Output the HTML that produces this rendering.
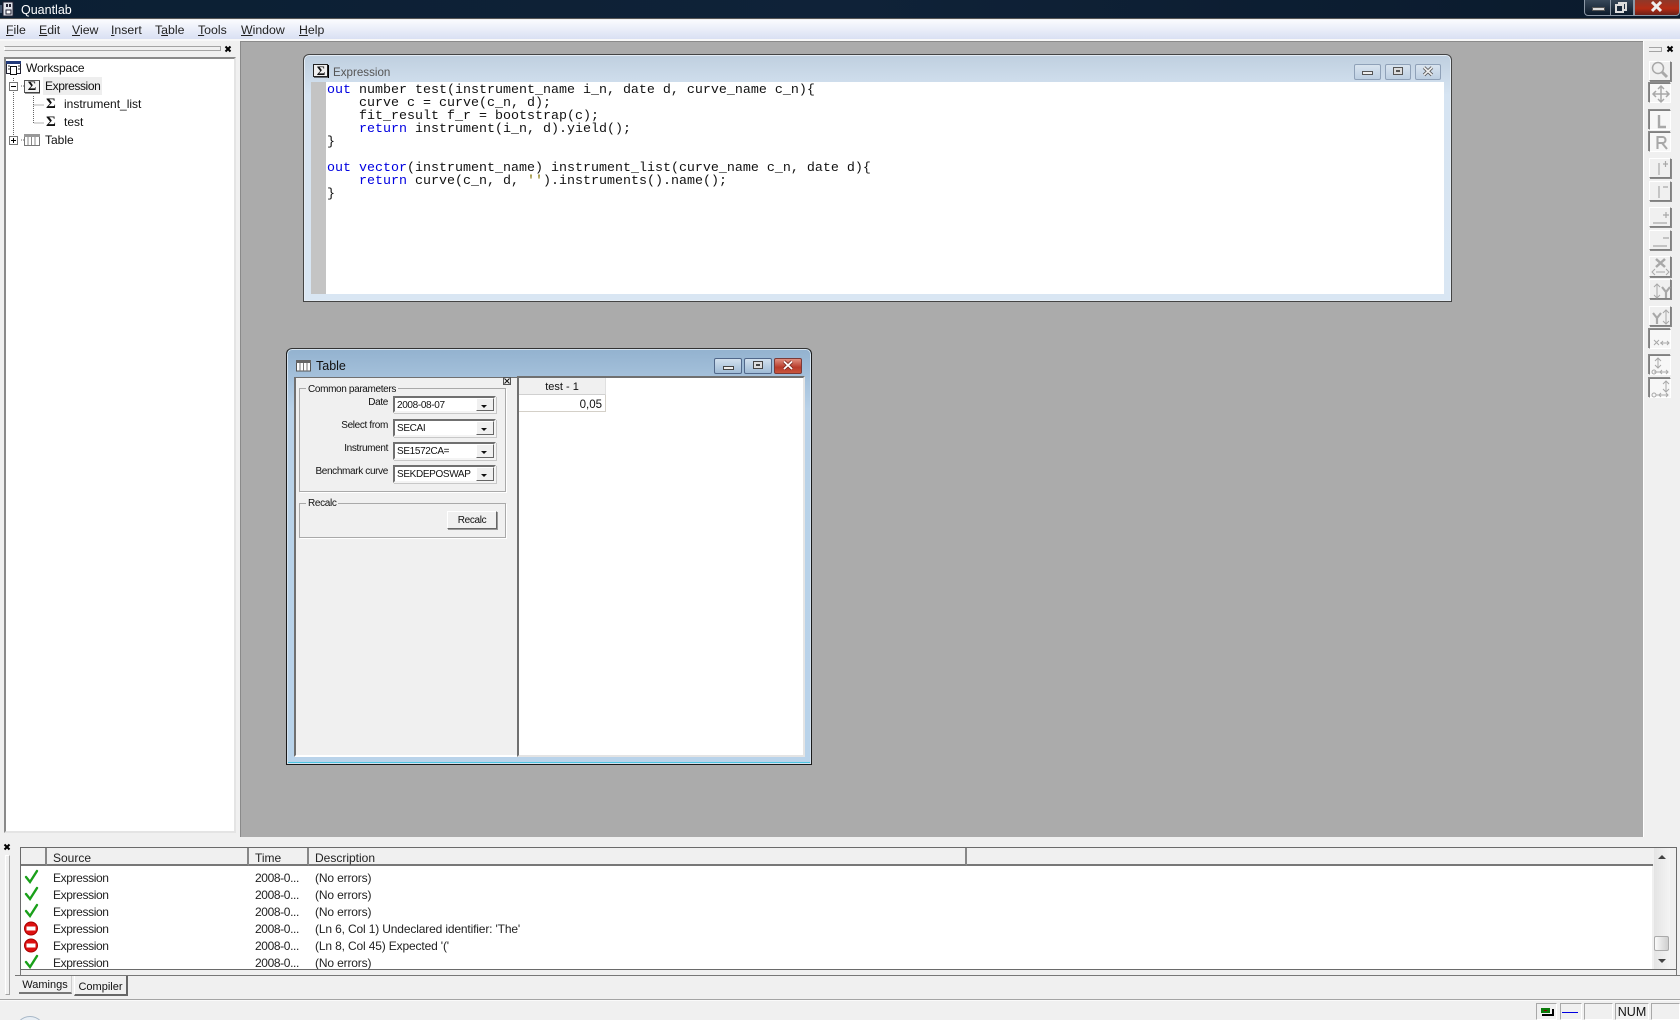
<!DOCTYPE html>
<html><head><meta charset="utf-8"><title>Quantlab</title>
<style>
html,body{margin:0;padding:0;width:1680px;height:1020px;overflow:hidden;background:#f0f0f0}
body{position:relative;font:12px "Liberation Sans",sans-serif;color:#111}
div,span.a,svg.a{position:absolute;box-sizing:border-box}
.t{white-space:nowrap;line-height:16px;height:16px}
.m{top:22px;font-size:12.3px;color:#222}
.code{font:13.33px/13px "Liberation Mono",monospace;white-space:pre;color:#111;left:327px;top:84px}
.code b{font-weight:normal;color:#0000e0}
.code i{font-style:normal;color:#807000}
.tb{left:1649px;width:22px;background:#f0f0f0;border:1px solid;border-color:#fff #808080 #808080 #fff;box-shadow:1px 1px 0 #8a8a8a}
.tb.on{border-color:#808080 #fff #fff #808080;box-shadow:-1px -1px 0 #8a8a8a;background:#f7f7f7}
.wb{height:16px;border:1px solid #8fa1b8;border-radius:2px;background:linear-gradient(#d9e4ef,#bdcfe2)}
.combo{left:393px;width:103px;background:#fff;border:2px solid;border-color:#707070 #f4f4f4 #f4f4f4 #707070;box-shadow:1px 1px 0 #c8c8c8;font-size:10px;letter-spacing:-.35px;line-height:13px;padding:1px 0 0 2px;color:#111;white-space:nowrap;overflow:hidden}
.combo u{position:absolute;text-decoration:none;right:0;top:0;bottom:0;width:16px;background:#f0f0f0;border:1px solid;border-color:#fff #666 #666 #fff}
.combo u:after{content:"";position:absolute;left:4px;top:6px;border:3px solid transparent;border-top:3px solid #111;border-bottom:0}
.lab{width:100px;left:288px;text-align:right;font-size:10px;letter-spacing:-.35px;color:#111}
.grp{left:299px;width:207px;border:1px solid #a9a9a9;box-shadow:1px 1px 0 #fff}
.row{font-size:12px;color:#222;letter-spacing:-.15px}
.row.n{letter-spacing:-.38px}
.hd{top:848px;height:18px;background:#f0f0f0;border-right:2px solid #888;border-bottom:2px solid #777;font-size:12px;line-height:19px;padding:1px 0 0 6px;color:#222}
.st{top:1003px;height:17px;border:1px solid;border-color:#a8a8a8 #fff #fff #a8a8a8}
</style></head><body>

<!-- Title bar -->
<div style="left:0;top:0;width:1680px;height:19px;background:linear-gradient(90deg,#0b1f33,#0f2238 50%,#0a1a2c);border-bottom:1px solid #555"></div>
<svg class="a" style="left:0;top:1px" width="16" height="16"><rect x="3" y="1" width="10" height="14" fill="#dfe3ea" stroke="#223"/><rect x="6" y="3" width="2" height="3" fill="#223"/><rect x="9" y="3" width="2" height="3" fill="#223"/><rect x="6" y="9" width="5" height="4" fill="#fff" stroke="#223"/><path d="M1 4v8" stroke="#7a8aa8"/></svg>
<div class="t" style="left:21px;top:2px;color:#fff;font-size:12.5px">Quantlab</div>
<div style="left:1584px;top:-2px;width:29px;height:18px;background:linear-gradient(#3a4a5c,#0c1a2a);border:1px solid #8c98a6;border-radius:0 0 0 4px"></div>
<div style="left:1592px;top:7px;width:13px;height:4px;background:#ddd;border:1px solid #555"></div>
<div style="left:1610px;top:-2px;width:24px;height:18px;background:linear-gradient(#3a4a5c,#0c1a2a);border:1px solid #8c98a6"></div>
<div style="left:1618px;top:2px;width:9px;height:9px;border:2px solid #ddd"></div>
<div style="left:1615px;top:4px;width:9px;height:9px;border:2px solid #ddd;background:#1a2a3c"></div>
<div style="left:1634px;top:-2px;width:46px;height:18px;background:linear-gradient(#8a3a2c,#b42c14 60%,#6a2018);border:1px solid #8c98a6;border-radius:0 0 4px 0"></div>
<svg class="a" style="left:1650px;top:1px" width="14" height="12"><path d="M2 1l9 9M11 1l-9 9" stroke="#eee" stroke-width="3"/></svg>

<!-- Menu -->
<div style="left:0;top:20px;width:1680px;height:19px;background:linear-gradient(#fafbfe,#d9e0f3)"></div>
<div style="left:0;top:39px;width:1680px;height:2px;background:#f8f8f8"></div>
<div class="t m" style="left:6px"><u>F</u>ile</div>
<div class="t m" style="left:39px"><u>E</u>dit</div>
<div class="t m" style="left:72px"><u>V</u>iew</div>
<div class="t m" style="left:111px"><u>I</u>nsert</div>
<div class="t m" style="left:155px">T<u>a</u>ble</div>
<div class="t m" style="left:198px"><u>T</u>ools</div>
<div class="t m" style="left:241px"><u>W</u>indow</div>
<div class="t m" style="left:299px"><u>H</u>elp</div>

<!-- MDI -->
<div style="left:240px;top:41px;width:1404px;height:796px;background:#ababab;border-top:1px solid #8a8a8a;border-left:1px solid #8a8a8a"></div>

<!-- Left panel -->
<div style="left:4px;top:46px;width:217px;height:5px;border:1px solid #a4a4a4;border-left-color:#fff"></div>
<svg class="a" style="left:224px;top:45px" width="9" height="9"><path d="M1.5 1.5l5 5M6.5 1.5l-5 5" stroke="#000" stroke-width="2"/></svg>
<div style="left:4px;top:57px;width:232px;height:776px;background:#fff;border:2px solid;border-color:#8a8a8a #e4e4e4 #e4e4e4 #8a8a8a"></div>
<div style="left:43px;top:77px;width:59px;height:18px;background:#eeeeee"></div>
<svg class="a" style="left:4px;top:58px" width="150" height="100">
 <g stroke="#666" stroke-dasharray="1 1" fill="none"><path d="M9.5 20V82M17 28H20M29.5 38V65H40M29.5 47H40M17 82H20"/></g>
 <g fill="#fff" stroke="#777"><rect x="5.5" y="24.5" width="8" height="8"/><rect x="5.5" y="78.5" width="8" height="8"/></g>
 <path d="M7 28.5h5M7 82.5h5M9.5 80v5" stroke="#000"/>
 <rect x="2.5" y="3.5" width="14" height="12" fill="#fff" stroke="#223"/><rect x="2" y="3" width="15" height="3" fill="#223a7a"/><rect x="6.500" y="8.500" width="6" height="8" fill="#fff" stroke="#111"/><path d="M4 8h2M4 11h2M14 8h2M14 11h2" stroke="#333"/>
 <rect x="20.500" y="22.500" width="15" height="12" fill="#f4f4f4" stroke="#555"/><path d="M35.500 23v12H21" stroke="#333" fill="none"/>
 <rect x="20.500" y="76.500" width="15" height="11" fill="#fff" stroke="#777"/><rect x="20" y="76" width="16" height="3" fill="#999"/><path d="M24 79v8M27.500 79v8M31 79v8" stroke="#888"/>
</svg>
<div class="t" style="left:26px;top:60px;letter-spacing:-.15px">Workspace</div>
<div class="t" style="left:45px;top:78px;letter-spacing:-.4px">Expression</div>
<div class="t" style="left:64px;top:96px">instrument_list</div>
<div class="t" style="left:64px;top:114px">test</div>
<div class="t" style="left:45px;top:132px">Table</div>
<div class="t" style="left:25px;top:78px;width:14px;text-align:center;font:bold 13px/16px 'Liberation Serif',serif">Σ</div>
<div class="t" style="left:46px;top:96px;font:bold 15px/16px 'Liberation Serif',serif">Σ</div>
<div class="t" style="left:46px;top:114px;font:bold 15px/16px 'Liberation Serif',serif">Σ</div>

<!-- Expression window -->
<div style="left:303px;top:54px;width:1149px;height:248px;border:1px solid #444;border-radius:6px 6px 0 0;background:linear-gradient(#bfcfdf,#d6e4f2 40px,#d9e6f3);box-shadow:inset 0 0 0 1px #e4ecf4"></div>
<svg class="a" style="left:313px;top:64px" width="16" height="14"><rect x=".5" y=".5" width="14" height="12" fill="#f0f0f0" stroke="#222"/><path d="M15.500 1v13H1" stroke="#000" fill="none"/></svg>
<div class="t" style="left:314px;top:63px;width:14px;text-align:center;font:bold 13px/16px 'Liberation Serif',serif">Σ</div>
<div class="t" style="left:333px;top:65px;color:#555;font-size:11.6px">Expression</div>
<div class="wb" style="left:1354px;top:64px;width:27px"></div><div style="left:1362px;top:71px;width:11px;height:4px;background:#eee;border:1px solid #555"></div>
<div class="wb" style="left:1385px;top:64px;width:26px"></div><div style="left:1393px;top:67px;width:10px;height:8px;border:1px solid #555;background:#ddd"></div><div style="left:1396px;top:70px;width:4px;height:2px;background:#555"></div>
<div class="wb" style="left:1415px;top:64px;width:26px"></div>
<svg class="a" style="left:1422px;top:66px" width="13" height="11"><path d="M2 1.500l8 7.500M10 1.500l-8 7.500" stroke="#555" stroke-width="3.400"/><path d="M2 1.500l8 7.500M10 1.500l-8 7.500" stroke="#eee" stroke-width="1.800"/></svg>
<div style="left:311px;top:82px;width:1133px;height:212px;background:#fff"></div>
<div style="left:311px;top:82px;width:15px;height:212px;background:#c4c4c4"></div>
<div class="code"><b>out</b> number test(instrument_name i_n, date d, curve_name c_n){
    curve c = curve(c_n, d);
    fit_result f_r = bootstrap(c);
    <b>return</b> instrument(i_n, d).yield();
}

<b>out</b> <b>vector</b>(instrument_name) instrument_list(curve_name c_n, date d){
    <b>return</b> curve(c_n, d, <i>''</i>).instruments().name();
}</div>

<!-- Table window -->
<div style="left:286px;top:348px;width:526px;height:417px;border:1px solid #1a1a1a;border-top-color:#333;border-radius:6px 6px 0 0;background:linear-gradient(#93b2cf,#b8d1e8 60px,#b9d3ea);box-shadow:inset 0 0 0 1px #d4e2ef,inset 0 -1px 0 1px #4cc4e0"></div>
<svg class="a" style="left:296px;top:360px" width="16" height="12"><rect x=".5" y=".5" width="14" height="10.500" fill="#fff" stroke="#555"/><rect x="0" y="0" width="15" height="3" fill="#666"/><path d="M4 3v8M7.500 3v8M11 3v8" stroke="#777"/></svg>
<div class="t" style="left:316px;top:358px;font-size:12.5px;color:#111">Table</div>
<div class="wb" style="left:714px;top:358px;width:28px;background:linear-gradient(#d2e0ee,#9fbbd6);border-color:#51688a"></div><div style="left:723px;top:366px;width:11px;height:4px;background:#eee;border:1px solid #444"></div>
<div class="wb" style="left:744px;top:358px;width:28px;background:linear-gradient(#d2e0ee,#9fbbd6);border-color:#51688a"></div><div style="left:753px;top:361px;width:10px;height:8px;border:1px solid #444;background:#ddd"></div><div style="left:756px;top:364px;width:4px;height:2px;background:#444"></div>
<div class="wb" style="left:774px;top:358px;width:28px;background:linear-gradient(#e09080,#b83a2a 60%,#c8553c);border-color:#7a3a38"></div>
<svg class="a" style="left:782px;top:360px" width="13" height="11"><path d="M2 1.500l8 7.500M10 1.500l-8 7.500" stroke="#7a2a20" stroke-width="3.400"/><path d="M2 1.500l8 7.500M10 1.500l-8 7.500" stroke="#fff" stroke-width="1.800"/></svg>

<div style="left:294px;top:377px;width:225px;height:380px;background:#f0f0f0;border-left:2px solid #707070;border-top:1px solid #707070;border-bottom:2px solid #fff"></div>
<div style="left:517px;top:376px;width:288px;height:381px;background:#fff;border-left:2px solid #707070;border-top:2px solid #707070;border-right:2px solid #e4e4e4;border-bottom:2px solid #e4e4e4"></div>
<div style="left:519px;top:378px;width:87px;height:17px;background:#f0f0f0;border-bottom:1px solid #d0d0d0;border-right:1px solid #e0e0e0;text-align:center;font-size:11px;line-height:19px">test - 1</div>
<div style="left:519px;top:395px;width:87px;height:17px;border-bottom:1px solid #d4d0c8;border-right:1px solid #d4d0c8;text-align:right;padding-right:3px;font-size:11.5px;line-height:20px">0,05</div>
<div style="left:503px;top:377px;width:8px;height:8px;border:1px solid #555"></div>
<svg class="a" style="left:504px;top:378px" width="6" height="6"><path d="M.5 .5l5 5M5.500 .5l-5 5" stroke="#111"/></svg>

<div class="grp" style="top:388px;height:104px"></div>
<div class="t" style="left:306px;top:380px;background:#f0f0f0;padding:2px 2px 0;font-size:10px;letter-spacing:-.35px">Common parameters</div>
<div class="t lab" style="top:395px">Date</div>
<div class="t lab" style="top:418px">Select from</div>
<div class="t lab" style="top:441px">Instrument</div>
<div class="t lab" style="top:464px">Benchmark curve</div>
<div class="combo" style="top:396px;height:17px">2008-08-07<u></u></div>
<div class="combo" style="top:419px;height:18px">SECAI<u></u></div>
<div class="combo" style="top:442px;height:18px">SE1572CA=<u></u></div>
<div class="combo" style="top:465px;height:18px">SEKDEPOSWAP<u></u></div>
<div class="grp" style="top:503px;height:35px"></div>
<div class="t" style="left:306px;top:495px;background:#f0f0f0;padding:1px 2px 0;font-size:10px;letter-spacing:-.35px">Recalc</div>
<div style="left:447px;top:511px;width:50px;height:18px;background:#f0f0f0;border:1px solid;border-color:#fff #666 #666 #fff;box-shadow:1px 1px 0 #999;text-align:center;font-size:10px;letter-spacing:-.35px;line-height:18px">Recalc</div>

<!-- Right toolbar -->
<div style="left:1643px;top:41px;width:37px;height:796px;background:#f0f0f0;border-left:1px solid #fff"></div>
<div style="left:1649px;top:47px;width:13px;height:5px;border:1px solid #a4a4a4;border-left:0"></div>
<svg class="a" style="left:1666px;top:45px" width="9" height="9"><path d="M1.500 1.500l5 5M6.500 1.500l-5 5" stroke="#000" stroke-width="2"/></svg>
<div class="tb" style="top:61px;height:20px"></div>
<div class="tb on" style="top:83px;height:20px"></div>
<div class="tb on" style="top:110px;height:20px"></div>
<div class="tb on" style="top:132px;height:20px"></div>
<div class="tb" style="top:158px;height:20px"></div>
<div class="tb" style="top:181px;height:20px"></div>
<div class="tb" style="top:207px;height:20px"></div>
<div class="tb" style="top:230px;height:20px"></div>
<div class="tb" style="top:256px;height:21px"></div>
<div class="tb" style="top:279px;height:20px"></div>
<div class="tb" style="top:306px;height:20px"></div>
<div class="tb on" style="top:329px;height:20px"></div>
<div class="tb on" style="top:355px;height:20px"></div>
<div class="tb on" style="top:378px;height:20px"></div>
<svg class="a" style="left:1649px;top:60px" width="24" height="342" fill="none" stroke="#a8a8a8">
 <circle cx="9" cy="8" r="5.500" stroke-width="1.500"/><path d="M13 12l5 5" stroke-width="3"/>
 <path d="M12 26v16M4 34h16M9 29l3-3 3 3M9 39l3 3 3-3M7 31l-3 3 3 3M17 31l3 3-3 3" stroke-width="1.500"/>
 <path d="M10 55v12h7" stroke-width="2.400"/>
 <path d="M8.500 89v-12h5a3 3 0 0 1 0 6h-5M13 83l5 6" stroke-width="2.100"/>
 <path d="M10 103v12M14 104h5M16.500 101v6" stroke-width="1.200"/>
 <path d="M10 126v12M14 127h5" stroke-width="1.200"/>
 <path d="M4 163h14M14 155h6M17 152v6" stroke-width="1.200"/>
 <path d="M4 186h14M14 178h6" stroke-width="1.200"/>
 <path d="M7 199l9 8M16 199l-9 8" stroke-width="2.500"/><path d="M7 212h9M6 209l-3 3 3 3M17 209l3 3-3 3" stroke-width="1"/>
 <path d="M8 224v14M5 227l3-3 3 3M5 235l3 3 3-3" stroke-width="1"/><path d="M13 227l4 5 4-5M17 232v6" stroke-width="2.200"/>
 <path d="M4 253l4 5 4-5M8 258v6" stroke-width="2.200"/><path d="M17 250v14M14 253l3-3 3 3M14 261l3 3 3-3" stroke-width="1"/>
 <path d="M5 280l5 5M10 280l-5 5M11 283h9M14 281l-2 2 2 2M18 281l2 2-2 2" stroke-width="1"/>
 <path d="M9 298v10M6 301l3-3 3 3M6 305l3 3 3-3M5 312h14M13 310l-2 2 2 2M17 310l2 2-2 2" stroke-width="1"/><circle cx="5" cy="312" r="2" stroke-width="1"/>
 <path d="M17 321v11M14 324l3-3 3 3M14 329l3 3 3-3M7 335h12M12 333l-2 2 2 2M17 333l2 2-2 2" stroke-width="1"/><circle cx="5" cy="335" r="2" stroke-width="1"/>
</svg>

<!-- Bottom panel -->
<svg class="a" style="left:3px;top:843px" width="9" height="9"><path d="M1.500 1.500l5 5M6.500 1.500l-5 5" stroke="#000" stroke-width="2"/></svg>
<div style="left:5px;top:855px;width:5px;height:140px;border:1px solid #a4a4a4;border-top-color:#fff;border-left-color:#fff"></div>
<div style="left:20px;top:847px;width:1657px;height:129px;background:#fff;border:1px solid #6a6a6a;box-shadow:inset -1px -1px 0 #999"></div>
<div style="left:1652px;top:848px;width:24px;height:121px;background:#f0f0f0"></div>
<div style="left:20px;top:969px;width:1657px;height:7px;background:#f0f0f0;border-top:1px solid #6a6a6a;border-bottom:1px solid #777;border-right:1px solid #777;border-left:1px solid #777"></div>
<div class="hd" style="left:21px;width:26px"></div>
<div class="hd" style="left:47px;width:202px">Source</div>
<div class="hd" style="left:249px;width:60px">Time</div>
<div class="hd" style="left:309px;width:658px">Description</div>
<div class="hd" style="left:967px;width:686px;border-right:0"></div>
<div style="left:1654px;top:848px;width:16px;height:121px;background:linear-gradient(90deg,#e4e4e4,#f4f4f4)"></div>
<div style="left:1658px;top:855px;border:4px solid transparent;border-bottom:4px solid #444;border-top:0"></div>
<div style="left:1654px;top:936px;width:15px;height:15px;border:1px solid #aaa;border-radius:2px;background:linear-gradient(90deg,#fafafa,#cfcfcf)"></div>
<div style="left:1658px;top:959px;border:4px solid transparent;border-top:4px solid #444;border-bottom:0"></div>

<svg class="a" style="left:21px;top:868px" width="22" height="101" stroke-linecap="round">
 <g fill="none" stroke="#1aa01a" stroke-width="2.400"><path d="M5 9l4 5L16 3"/><path d="M5 26l4 5L16 20"/><path d="M5 43l4 5L16 37"/><path d="M5 94l4 5L16 88"/></g>
 <circle cx="10" cy="60.500" r="6.500" fill="#dd1010" stroke="#a00"/><rect x="5.500" y="58.500" width="9" height="4" fill="#fff"/>
 <circle cx="10" cy="77.500" r="6.500" fill="#dd1010" stroke="#a00"/><rect x="5.500" y="75.500" width="9" height="4" fill="#fff"/>
</svg>
<div class="t row n" style="left:53px;top:870px">Expression</div><div class="t row n" style="left:255px;top:870px">2008-0...</div><div class="t row" style="left:315px;top:870px">(No errors)</div>
<div class="t row n" style="left:53px;top:887px">Expression</div><div class="t row n" style="left:255px;top:887px">2008-0...</div><div class="t row" style="left:315px;top:887px">(No errors)</div>
<div class="t row n" style="left:53px;top:904px">Expression</div><div class="t row n" style="left:255px;top:904px">2008-0...</div><div class="t row" style="left:315px;top:904px">(No errors)</div>
<div class="t row n" style="left:53px;top:921px">Expression</div><div class="t row n" style="left:255px;top:921px">2008-0...</div><div class="t row" style="left:315px;top:921px">(Ln 6, Col 1) Undeclared identifier: 'The'</div>
<div class="t row n" style="left:53px;top:938px">Expression</div><div class="t row n" style="left:255px;top:938px">2008-0...</div><div class="t row" style="left:315px;top:938px">(Ln 8, Col 45) Expected '('</div>
<div class="t row n" style="left:53px;top:955px;height:14px;overflow:hidden">Expression</div><div class="t row n" style="left:255px;top:955px;height:14px;overflow:hidden">2008-0...</div><div class="t row" style="left:315px;top:955px;height:14px;overflow:hidden">(No errors)</div>

<!-- Tabs -->
<div style="left:15px;top:975px;width:1665px;height:1px;background:#777"></div>
<div style="left:19px;top:976px;width:53px;height:18px;background:#f0f0f0;border-bottom:2px solid #777;border-right:1px solid #ccc;text-align:center;font-size:11px;line-height:19px">Wamings</div>
<div style="left:74px;top:976px;width:54px;height:20px;background:#f0f0f0;border-bottom:2px solid #666;border-right:2px solid #666;border-left:1px solid #fff;text-align:center;font-size:11px;line-height:23px">Compiler</div>

<!-- Status bar -->
<div style="left:0;top:999px;width:1680px;height:1px;background:#a4a4a4"></div>
<div style="left:0;top:1000px;width:1680px;height:1px;background:#fafafa"></div>
<div class="st" style="left:1536px;width:21px"></div>
<div style="left:1541px;top:1008px;width:9px;height:5px;background:#0a7a0a"></div>
<div style="left:1544px;top:1010px;width:3px;height:1px;background:#8a0000"></div>
<div style="left:1542px;top:1014px;width:12px;height:2px;background:#000"></div>
<div style="left:1552px;top:1009px;width:2px;height:6px;background:#000"></div>
<div class="st" style="left:1560px;width:22px"></div>
<div style="left:1562px;top:1012px;width:16px;height:1px;background:#0000e0"></div>
<div class="st" style="left:1584px;width:29px"></div>
<div class="st" style="left:1615px;width:34px;text-align:center;font-size:12.500px;line-height:16px;color:#111">NUM</div>
<div class="st" style="left:1651px;width:29px"></div>
<div style="left:15px;top:1016px;width:30px;height:30px;border-radius:50%;background:#e8eef4;border:1px solid #a8b8c8"></div>
</body></html>
